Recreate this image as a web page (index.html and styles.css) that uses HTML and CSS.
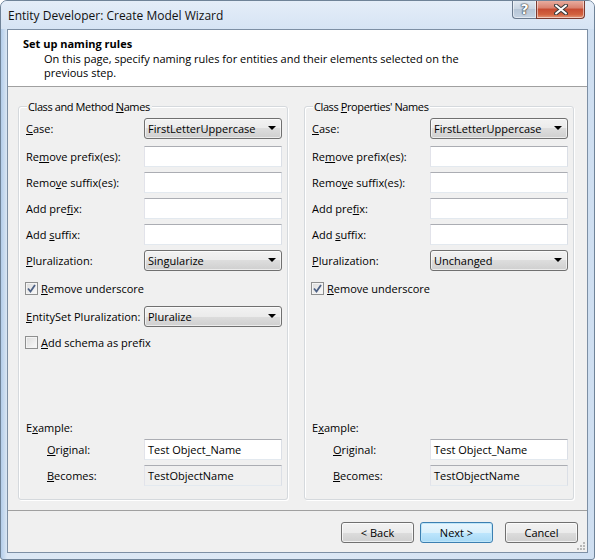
FILE: index.html
```html
<!DOCTYPE html>
<html>
<head>
  <meta charset="UTF-8" />
  <title>Create Model Wizard</title>
  <link rel="stylesheet" href="styles.css">
</head>
<body>
  <div class="window">
    <div class="titlebar">
      <span class="caption">Entity Developer: Create Model Wizard</span>
      <div class="caption-btns">
        <span class="cbtn help">?</span>
        <span class="cbtn close">
          <svg width="14" height="11" viewBox="0 0 14 11">
            <path d="M2 1.5 L12 9.5 M12 1.5 L2 9.5" stroke="#3b3b3b" stroke-width="4" stroke-linecap="round"/>
            <path d="M2 1.5 L12 9.5 M12 1.5 L2 9.5" stroke="#fff" stroke-width="2" stroke-linecap="round"/>
          </svg>
        </span>
      </div>
    </div>

    <div class="client">
      <div class="header">
        <div class="h-title">Set up naming rules</div>
        <div class="h-desc">On this page, specify naming rules for entities and their elements selected on the<br>previous step.</div>
      </div>

      <div class="content">
        <div class="group">
          <div class="group-title">Class and Method <u>N</u>ames</div>
          <div class="fields">
            <div class="row case"><span class="lbl"><u>C</u>ase:</span><div class="combo">FirstLetterUppercase</div></div>
            <div class="row"><span class="lbl">Re<u>m</u>ove prefix(es):</span><div class="text"></div></div>
            <div class="row"><span class="lbl">Remo<u>v</u>e suffix(es):</span><div class="text"></div></div>
            <div class="row"><span class="lbl">Add pre<u>f</u>ix:</span><div class="text"></div></div>
            <div class="row"><span class="lbl">Add <u>s</u>uffix:</span><div class="text"></div></div>
            <div class="row"><span class="lbl"><u>P</u>luralization:</span><div class="combo">Singularize</div></div>
            <div class="check first-check"><span class="box"><svg width="9" height="9" viewBox="0 0 9 9"><path d="M1 4.5 L3.5 7.5 L8 1" fill="none" stroke="#4d6185" stroke-width="1.8"/></svg></span><span><u>R</u>emove underscore</span></div>
            <div class="row entityset"><span class="lbl"><u>E</u>ntitySet Pluralization:</span><div class="combo">Pluralize</div></div>
            <div class="check schema"><span class="box"></span><span><u>A</u>dd schema as prefix</span></div>
          </div>
          <div class="example">
            <div class="ex-title">E<u>x</u>ample:</div>
            <div class="row"><span class="lbl indent"><u>O</u>riginal:</span><div class="text">Test Object_Name</div></div>
            <div class="row"><span class="lbl indent"><u>B</u>ecomes:</span><div class="text readonly">TestObjectName</div></div>
          </div>
        </div>

        <div class="group">
          <div class="group-title">Class <u>P</u>roperties' Names</div>
          <div class="fields">
            <div class="row case"><span class="lbl"><u>C</u>ase:</span><div class="combo">FirstLetterUppercase</div></div>
            <div class="row"><span class="lbl">Re<u>m</u>ove prefix(es):</span><div class="text"></div></div>
            <div class="row"><span class="lbl">Remo<u>v</u>e suffix(es):</span><div class="text"></div></div>
            <div class="row"><span class="lbl">Add pre<u>f</u>ix:</span><div class="text"></div></div>
            <div class="row"><span class="lbl">Add <u>s</u>uffix:</span><div class="text"></div></div>
            <div class="row"><span class="lbl"><u>P</u>luralization:</span><div class="combo">Unchanged</div></div>
            <div class="check first-check"><span class="box"><svg width="9" height="9" viewBox="0 0 9 9"><path d="M1 4.5 L3.5 7.5 L8 1" fill="none" stroke="#4d6185" stroke-width="1.8"/></svg></span><span><u>R</u>emove underscore</span></div>
          </div>
          <div class="example">
            <div class="ex-title">E<u>x</u>ample:</div>
            <div class="row"><span class="lbl indent"><u>O</u>riginal:</span><div class="text">Test Object_Name</div></div>
            <div class="row"><span class="lbl indent"><u>B</u>ecomes:</span><div class="text readonly">TestObjectName</div></div>
          </div>
        </div>
      </div>

      <div class="footer">
        <span class="btn">&lt; Back</span>
        <span class="btn default">Next &gt;</span>
        <span class="btn cancel">Cancel</span>
        <svg class="grip" width="10" height="10" viewBox="0 0 10 10">
          <g fill="#b8b8b8">
            <rect x="7" y="1" width="2" height="2"/>
            <rect x="4" y="4" width="2" height="2"/><rect x="7" y="4" width="2" height="2"/>
            <rect x="1" y="7" width="2" height="2"/><rect x="4" y="7" width="2" height="2"/><rect x="7" y="7" width="2" height="2"/>
          </g>
        </svg>
      </div>
    </div>
  </div>
</body>
</html>
```

FILE: styles.css
```css
body {
  margin: 0;
  background: #fff;
  font-family: 'Open Sans', 'Noto Sans', sans-serif;
  font-size: 11px;
  color: #000;
}

.window {
  width: 595px;
  height: 560px;
  box-sizing: border-box;
  border: 1px solid #6f8398;
  border-radius: 7px 7px 3px 3px;
  background: linear-gradient(90deg, #b3cdea 0, #dbe7f4 6px, #dde8f5 50%, #cfdff1 100%);
  display: flex;
  flex-direction: column;
  overflow: hidden;
}

.titlebar {
  height: 28px;
  display: flex;
  align-items: center;
  padding: 0 9px 0 7px;
  background: linear-gradient(#e4edf8, #d6e4f4);
}

.caption {
  font-size: 12px;
  color: #111;
  margin-top: 1px;
}

.caption-btns {
  margin-left: auto;
  align-self: flex-start;
  display: flex;
  margin-top: -1px;
}

.cbtn {
  height: 18px;
  display: flex;
  align-items: center;
  justify-content: center;
  border: 1px solid #6a7a8e;
  border-top: none;
  box-shadow: inset 0 0 0 1px rgba(255, 255, 255, 0.5);
}

.help {
  width: 23px;
  border-radius: 0 0 0 4px;
  border-right: none;
  background: linear-gradient(#e3eaf2, #c9d5e2 50%, #b6c5d6 51%, #c5d3e3);
  color: #fff;
  font-size: 14px;
  font-weight: bold;
  font-family: 'DejaVu Sans', sans-serif;
  text-shadow: 0 0 1px #333, 0 0 1px #333, 0 0 2px #444;
}

.close {
  width: 47px;
  border-radius: 0 0 4px 0;
  border-color: #7a3a30;
  background: linear-gradient(#eab2a5, #d9806d 45%, #c64b32 50%, #d2613e 80%, #e4997a);
}

.client {
  flex: 1;
  margin: 0 6px 6px 6px;
  border: 1px solid #7d8fa4;
  background: #f0f0f0;
  display: flex;
  flex-direction: column;
}

.header {
  height: 57px;
  box-sizing: border-box;
  background: #fff;
  border-bottom: 1px solid #a0a0a0;
  padding: 6px 0 0 15px;
}

.h-title {
  font-weight: bold;
  line-height: 16px;
}

.h-desc {
  padding-left: 21px;
  line-height: 14px;
}

.content {
  flex: 1;
  display: flex;
  gap: 16px;
  padding: 19px 13px 10px 10px;
  border-bottom: 1px solid #a0a0a0;
}

.group {
  width: 270px;
  box-sizing: border-box;
  border: 1px solid #d5d9dd;
  border-radius: 3px;
  box-shadow: inset 1px 1px 0 #fff, 1px 1px 0 #fff;
  padding: 0 5px 13px 7px;
  display: flex;
  flex-direction: column;
}

.group-title {
  width: max-content;
  margin: -8px 0 0 1px;
  padding: 0 2px 0 1px;
  background: #f0f0f0;
  line-height: 16px;
  letter-spacing: -0.4px;
}

.fields {
  display: flex;
  flex-direction: column;
  gap: 5px;
  margin-top: 3px;
}

.row {
  display: flex;
  align-items: center;
}

.row.case {
  margin-bottom: 2px;
}

.lbl {
  width: 118px;
  flex-shrink: 0;
  white-space: nowrap;
}

.lbl.indent {
  padding-left: 21px;
  box-sizing: border-box;
}

.text,
.combo {
  width: 138px;
  height: 21px;
  box-sizing: border-box;
  line-height: 19px;
  padding-left: 3px;
  white-space: nowrap;
}

.text {
  background: #fff;
  border: 1px solid;
  border-color: #abadb3 #dbdfe6 #e3e9ef #e2e3ea;
}

.text.readonly {
  background: #f0f0f0;
}

.combo {
  position: relative;
  border: 1px solid #707070;
  border-radius: 3px;
  background: linear-gradient(#f2f2f2, #ebebeb 50%, #dddddd 50%, #cfcfcf);
  box-shadow: inset 0 0 0 1px rgba(255, 255, 255, 0.6);
}

.combo::after {
  content: "";
  position: absolute;
  right: 5px;
  top: 7px;
  border-left: 4px solid transparent;
  border-right: 4px solid transparent;
  border-top: 4px solid #000;
}

.check {
  display: flex;
  align-items: center;
  height: 22px;
  margin-left: -1px;
}

.check.first-check {
  margin-top: 1px;
}

.row.entityset {
  margin-top: 2px;
}

.check.schema {
  margin-top: -1px;
}

.box {
  width: 13px;
  height: 13px;
  box-sizing: border-box;
  border: 1px solid #8e8f8f;
  background: linear-gradient(135deg, #dcdcdc, #fafafa);
  box-shadow: inset 0 0 0 1px #f4f4f4;
  margin-right: 3px;
  display: flex;
  align-items: center;
  justify-content: center;
}

.example {
  margin-top: auto;
  display: flex;
  flex-direction: column;
  gap: 5px;
}

.ex-title {
  line-height: 16px;
  margin-bottom: -2px;
}

.footer {
  height: 41px;
  display: flex;
  align-items: flex-start;
  justify-content: flex-end;
  padding: 11px 9px 0 0;
  box-sizing: border-box;
  gap: 6px;
  position: relative;
}

.btn {
  width: 73px;
  height: 21px;
  box-sizing: border-box;
  border: 1px solid #707070;
  border-radius: 3px;
  background: linear-gradient(#f2f2f2, #ebebeb 50%, #dddddd 50%, #cfcfcf);
  box-shadow: inset 0 0 0 1px rgba(255, 255, 255, 0.7);
  text-align: center;
  line-height: 19px;
}

.btn.default {
  border-color: #3c7fb1;
  box-shadow: inset 0 0 0 1px #bfe6f9;
  background: linear-gradient(#eaf6fd, #d9f0fc 50%, #bee6fd 50%, #a7d9f5);
}

.btn.cancel {
  margin-left: 6px;
}

.grip {
  position: absolute;
  right: 1px;
  bottom: 1px;
}
```
